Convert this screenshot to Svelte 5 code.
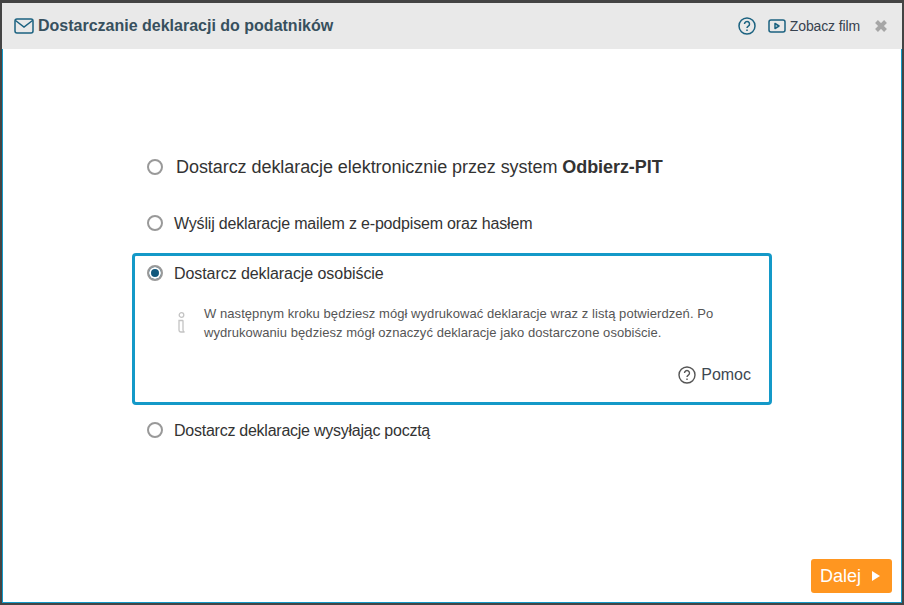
<script lang="ts">
const options = [
  { id: 'pit', label: 'Dostarcz deklaracje elektronicznie przez system ', strong: 'Odbierz-PIT', big: true },
  { id: 'mail', label: 'Wyślij deklaracje mailem z e-podpisem oraz hasłem' },
  { id: 'self', label: 'Dostarcz deklaracje osobiście', selected: true },
  { id: 'post', label: 'Dostarcz deklaracje wysyłając pocztą' },
]
</script>

<div class="frame">
  <header class="head">
    <svg class="mail" width="20" height="16" viewBox="0 0 20 16" fill="none" stroke="#1b6280" stroke-width="1.5">
      <path d="M3 1h14a2 2 0 0 1 2 2v10a2 2 0 0 1-2 2H3a2 2 0 0 1-2-2V3a2 2 0 0 1 2-2z" />
      <path d="M1.500 2.500 10 9l8.500-6.500" />
    </svg>
    <h1>Dostarczanie deklaracji do podatników</h1>
    <div class="tools">
      <svg class="help" width="18" height="18" viewBox="0 0 18 18" fill="none" stroke="#1b6280" stroke-width="1.500">
        <circle cx="9" cy="9" r="8" />
        <path d="M6.500 7a2.500 2.500 0 1 1 3.800 2.100C9.400 9.700 9 10.100 9 11" />
        <path d="M9 12.500v1.500" />
      </svg>
      <svg class="film" width="18" height="14" viewBox="0 0 18 14" fill="none" stroke="#1b6280" stroke-width="1.500">
        <path d="M3 1h12a2 2 0 0 1 2 2v8a2 2 0 0 1-2 2H3a2 2 0 0 1-2-2V3a2 2 0 0 1 2-2z" />
        <path d="M7 4.500v5l4-2.500z" stroke-linejoin="round" />
      </svg>
      <span>Zobacz film</span>
      <svg class="close" width="14" height="14" viewBox="0 0 14 14" fill="none" stroke="#a6a6a6" stroke-width="4">
        <path d="M2.500 2.500l9 9M11.500 2.500l-9 9" />
      </svg>
    </div>
  </header>

  <div class="content">
    <main class="body">
      {#each options as opt (opt.id)}
        <div class="option {opt.id}" class:selected={opt.selected} class:big={opt.big}>
          <div class="row">
            <span class="radio" class:on={opt.selected}></span>
            <span class="label">{opt.label}{#if opt.strong}<b>{opt.strong}</b>{/if}</span>
          </div>
          {#if opt.selected}
            <div class="info">
              <svg class="info-icon" width="9" height="22" viewBox="0 0 9 22" fill="none" stroke="#c4c4c4" stroke-width="1.300">
                <circle cx="4.500" cy="3" r="2.300" />
                <path d="M2 8.500h3.500q.5 0 .5.5v9q0 1.500 1.500 2H4q-2 0-2-2z" />
              </svg>
              <p>W następnym kroku będziesz mógł wydrukować deklaracje wraz z listą potwierdzeń. Po wydrukowaniu będziesz mógł oznaczyć deklaracje jako dostarczone osobiście.</p>
            </div>
            <div class="help-row">
              <svg width="18" height="18" viewBox="0 0 18 18" fill="none" stroke="#555" stroke-width="1.400">
                <circle cx="9" cy="9" r="8" />
                <path d="M6.500 7a2.500 2.500 0 1 1 3.800 2.100C9.400 9.700 9 10.100 9 11" />
                <path d="M9 12.500v1.500" />
              </svg>
              <span>Pomoc</span>
            </div>
          {/if}
        </div>
      {/each}
    </main>

    <footer class="foot">
      <button class="next">Dalej <span class="arrow"></span></button>
    </footer>
  </div>
</div>

<style>
  :global(body) {
    margin: 0;
    background: #444;
  }

  .frame {
    width: 904px;
    height: 605px;
    box-sizing: border-box;
    display: flex;
    flex-direction: column;
    padding: 3px 2px 2px;
    background: #444;
    font-family: 'Liberation Sans', Arial, sans-serif;
    color: #333;
  }

  .head {
    height: 46px;
    flex-shrink: 0;
    display: flex;
    align-items: center;
    padding: 0 14px 0 12px;
    background: #e9e9e9;
  }

  .mail {
    margin-right: 4px;
  }

  h1 {
    margin: 0;
    font-size: 16px;
    font-weight: bold;
    color: #37505e;
  }

  .tools {
    margin-left: auto;
    display: flex;
    align-items: center;
    font-size: 14px;
    letter-spacing: -0.13px;
    color: #37424f;
  }

  .help {
    margin-right: 12px;
  }

  .film {
    margin-right: 4px;
  }

  .close {
    margin-left: 14px;
  }

  .content {
    flex: 1;
    display: flex;
    flex-direction: column;
    background: #fff;
    border: 1px solid #1499c8;
    border-top: 0;
  }

  .body {
    flex: 1;
    padding: 107px 129px 0;
    display: flex;
    flex-direction: column;
  }

  .option {
    padding: 0 15px;
    margin-bottom: 19px;
    font-size: 16px;
    color: #333;
  }

  .option.mail {
    letter-spacing: -0.18px;
  }

  .option.self {
    letter-spacing: -0.07px;
  }

  .option.post {
    letter-spacing: -0.25px;
  }

  .label {
    margin-top: 2px;
  }

  .option.big {
    font-size: 18px;
    letter-spacing: -0.06px;
    margin-bottom: 34px;
  }

  .option.big .label {
    margin-top: 0;
    margin-left: 2px;
  }

  .option.selected {
    border: 3px solid #1499c8;
    border-radius: 4px;
    padding: 6px 18px 18px 12px;
    margin-bottom: 14px;
  }

  .row {
    display: flex;
    align-items: center;
    gap: 11px;
    height: 22px;
  }

  .radio {
    width: 16px;
    height: 16px;
    flex-shrink: 0;
    box-sizing: border-box;
    border: 2px solid #999;
    border-radius: 50%;
    background: #fff;
  }

  .radio.on {
    background: #11587c;
    box-shadow: inset 0 0 0 2px #fff;
  }

  .info {
    display: flex;
    gap: 18px;
    margin: 20px 0 0 30px;
    align-items: flex-start;
  }

  .info-icon {
    margin-top: 8px;
    flex-shrink: 0;
  }

  .info p {
    margin: 0;
    font-size: 13px;
    letter-spacing: 0.06px;
    line-height: 19px;
    color: #555;
  }

  .help-row {
    display: flex;
    justify-content: flex-end;
    align-items: center;
    gap: 5px;
    margin-top: 24px;
    font-size: 16px;
    letter-spacing: 0;
    color: #3d4852;
  }

  .foot {
    flex-shrink: 0;
    display: flex;
    justify-content: flex-end;
    padding: 0 9px 9px 0;
  }

  .next {
    width: 81px;
    height: 34px;
    padding: 0 3px 0 0;
    border: 0;
    border-radius: 3px;
    background: #ff9620;
    color: #fff;
    font: 18px 'Liberation Sans', Arial, sans-serif;
    display: flex;
    align-items: center;
    justify-content: center;
    gap: 11px;
  }

  .arrow {
    width: 0;
    height: 0;
    border-left: 8px solid #fff;
    border-top: 5px solid transparent;
    border-bottom: 5px solid transparent;
  }
</style>
